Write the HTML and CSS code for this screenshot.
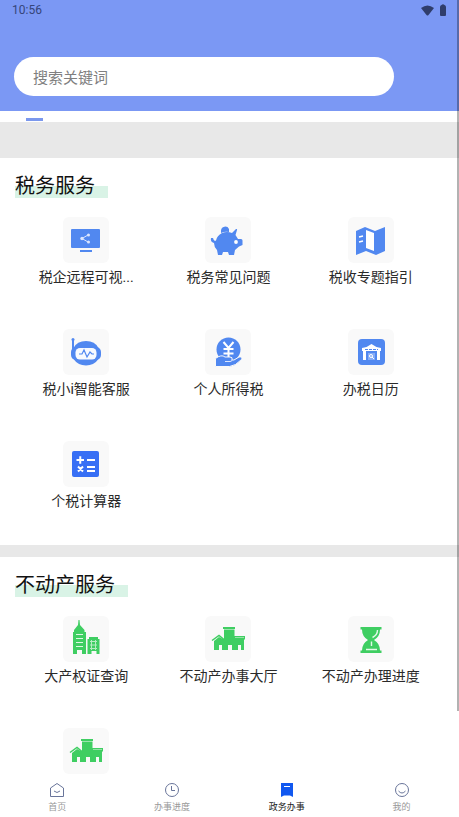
FILE: index.html
```html
<!DOCTYPE html>
<html lang="zh-CN">
<head>
<meta charset="utf-8">
<meta name="viewport" content="width=device-width, initial-scale=1">
<title>政务办事</title>
<link rel="stylesheet" href="styles.css">
</head>
<body>
<header class="header">
  <div class="status">
    <span>10:56</span>
    <span class="status-icons">
      <svg width="13" height="11" viewBox="0 0 13 11"><path d="M0 3Q6.500-2 13 3L7.500 10Q6.500 11 5.500 10Z"/></svg>
      <svg width="6" height="12" viewBox="0 0 6 12"><path d="M1.500 1Q3-.5 4.500 1Q6 1.500 6 3V11Q6 12 5 12H1Q0 12 0 11V3Q0 1.500 1.500 1Z"/></svg>
    </span>
  </div>
  <form class="search"><input type="search" placeholder="搜索关键词" aria-label="搜索关键词"></form>
</header>
<main class="content">
  <div class="tabs"><span class="tab-line"></span></div>
  <div class="band"></div>
  <section class="section">
    <h2>税务服务</h2>
    <div class="grid">
      <a class="item" href="#"><span class="tile"><svg class="blue" viewBox="0 0 46 46"><rect x="8" y="12" width="29" height="19" rx="1"/><path d="M17 33h12v2H17z"/><g fill="#dce7ff"><circle cx="19" cy="21.500" r="1.700"/><circle cx="25.500" cy="18" r="1.500"/><circle cx="25.500" cy="25" r="1.500"/></g><path d="M25 18l-6 3.500 6 3.500" fill="none" stroke="#dce7ff"/></svg></span><span class="label">税企远程可视...</span></a>
      <a class="item" href="#"><span class="tile"><svg class="blue" viewBox="0 0 46 46"><path d="M16 13.500a4.200 4.200 0 0 1 8-1.500v3q-4-1-8 1z"/><path d="M8 21q1 4 3 2.500 1-5 6-7.500 5-2 10 0l4-4q1.500-.5 1 1l-1.500 5 2.500 4h3q1.500 0 1.500 1.500v4.500l-3.500 1.500-4 3.500-1 5h-5l-1-3h-5l-1 3h-4l-1-5q-3-3-3-7-4-1-3-5z"/><circle cx="31" cy="25" r="1.900" fill="#fff"/></svg></span><span class="label">税务常见问题</span></a>
      <a class="item" href="#"><span class="tile"><svg class="blue" viewBox="0 0 46 46"><path d="M8 14l9-4 10 4 10-4v24l-9 4-10-4-10 4z"/><path d="M18 13l8 3v18l-8-3z" fill="#fff"/><path d="M11 20l4-1m-4 6l4-1" fill="none" stroke="#fff" stroke-width="1.500"/></svg></span><span class="label">税收专题指引</span></a>
      <a class="item" href="#"><span class="tile"><svg class="blue" viewBox="0 0 46 46"><circle cx="10" cy="10.500" r="1.500"/><path d="M9 11h2v11H9z"/><rect x="8" y="18" width="30" height="13" rx="5"/><path d="M10.500 19q3.500-7 12.500-7t12.500 7v11q-4.500 6.500-12.500 6.500T10.500 30z"/><rect x="12.500" y="19" width="21" height="11.500" rx="4.500" fill="#f7faff"/><path d="M16 25h3l2-4 3 7 3-5 2 2h2" fill="none" stroke="#5188f0" stroke-width="1.200"/></svg></span><span class="label">税小i智能客服</span></a>
      <a class="item" href="#"><span class="tile"><svg class="blue" viewBox="0 0 46 46"><circle cx="23.500" cy="20.500" r="12"/><path d="M18.500 13l5 6 5-6M23.500 19v9M18.500 20h10M18.500 24.500h10" fill="none" stroke="#fff" stroke-width="2"/><path d="M10.500 29.500q6-4.500 9.500-1.500h5q3 0 2 3h2l5-3q4-.5 2.500 2.500-6 6.500-12 7H10.500z" stroke="#f9f9f9"/><path d="M20 32.500h5q2 0 2-1.500" fill="none" stroke="#dce7ff"/></svg></span><span class="label">个人所得税</span></a>
      <a class="item" href="#"><span class="tile"><svg class="blue" viewBox="0 0 46 46"><rect x="10" y="10" width="27" height="26" rx="4"/><path d="M14 19q6-1 9.500-4 3.500 3 9.500 4v3H14zM15 22h3v9h-3zm14 0h3v9h-3z" fill="#fff"/><path d="M17 20.500h13" stroke="#5188f0" stroke-dasharray="3 1"/><rect x="20" y="24" width="7" height="7" fill="#86acf6"/><circle cx="23" cy="27" r="1.500" fill="none" stroke="#fff"/><path d="M24 28l2 2" stroke="#fff"/></svg></span><span class="label">办税日历</span></a>
      <a class="item" href="#"><span class="tile"><svg class="calc" viewBox="0 0 46 46"><rect x="9" y="10" width="27" height="26" rx="2"/><path d="M13.500 19h7.500m-3.750-3.750v7.500M24 19h8M15 25.500l5 5m0-5l-5 5M24 26h8m-8 4h8" fill="none" stroke="#fff" stroke-width="2"/></svg></span><span class="label">个税计算器</span></a>
    </div>
  </section>
  <div class="divider"></div>
  <section class="section">
    <h2>不动产服务</h2>
    <div class="grid">
      <a class="item" href="#"><span class="tile"><svg class="green" viewBox="0 0 46 46"><path d="M15.500 4h1l.5 5 4.500 5v2h1.500v22h-4v-4h-5v4h-4V16h1v-2l4-5z"/><path d="M13 18.500h7m-7 4h7m-7 4h7m-7 4h7" stroke="#dff7e4"/><path d="M26 21h9v2h1.500v15h-3v-3h-5v3h-4V23H26z"/><path d="M27 25.500h7m-7 3.500h7m-7 3.500h7M28.500 24v10m4-10v10" stroke="#b5ecc1"/></svg></span><span class="label">大产权证查询</span></a>
      <a class="item" href="#"><span class="tile"><svg class="green" viewBox="0 0 46 46"><use href="#hall"/></svg></span><span class="label">不动产办事大厅</span></a>
      <a class="item" href="#"><span class="tile"><svg class="green" viewBox="0 0 46 46"><path d="M12.500 11h21v2.500H32q0 7-6 10.500 6 3.500 6 10.500h1.500V37h-21v-2.500H14q0-7 6-10.500-6-3.500-6-10.500h-1.500z"/><path d="M29.500 14q0 5-5 7.500M23.500 25.500v4.500M18 33.500h11" fill="none" stroke="#e3f8e8" stroke-width="1.400"/></svg></span><span class="label">不动产办理进度</span></a>
      <a class="item" href="#"><span class="tile"><svg class="green" viewBox="0 0 46 46"><g id="hall"><path d="M18 11h12v2H18zM19 13.500h10.500V20H40v3.500h-1V34h-3v-5h-3v5h-6v-5h-4v5h-6v-5h-3v5H9V25l5-4 4 2h1z"/><path d="M7 24.500l7-5 5 4" fill="none" stroke="#3fce62" stroke-width="1.500"/><path d="M30 21.500h9" stroke="#a9e9b8" stroke-width=".8"/></g></svg></span></a>
    </div>
  </section>
</main>
<nav class="nav">
  <a href="#"><svg viewBox="0 0 16 16"><path d="M1.500 6L8 1.500 14.500 6v8.500h-13zM5 9q3 3 6 0"/></svg><span>首页</span></a>
  <a href="#"><svg viewBox="0 0 16 16"><circle cx="8" cy="8" r="6.500"/><path d="M7.500 4v4.500h3.500"/></svg><span>办事进度</span></a>
  <a class="active" href="#"><svg viewBox="0 0 16 16"><path class="solid" d="M2 1h12v14l-3-1.500H5L2 15z"/><path class="mark" d="M5 4.500h6"/></svg><span>政务办事</span></a>
  <a href="#"><svg viewBox="0 0 16 16"><circle cx="8" cy="8" r="6.500"/><path d="M4.500 9q3.500 4 7 0"/></svg><span>我的</span></a>
</nav>
<div class="scrollbar"></div>
</body>
</html>
```
FILE: styles.css
```css
* { box-sizing: border-box; }
body {
  margin: 0;
  height: 100vh;
  display: flex;
  flex-direction: column;
  position: relative;
  overflow: hidden;
  background: #fff;
  color: #2a2a2a;
  font-family: Roboto, "Noto Sans CJK SC", sans-serif;
}
a { color: inherit; text-decoration: none; }
.header { background: #7b98f4; padding-bottom: 15px; flex: none; }
.status {
  display: flex;
  justify-content: space-between;
  align-items: center;
  height: 20px;
  padding: 0 13px 0 12px;
  font-size: 12px;
  color: #35457a;
}
.status-icons { display: flex; align-items: center; gap: 6px; }
.status-icons svg { fill: #2f3d6b; }
.search { margin: 37px 65px 0 14px; }
.search input {
  display: block;
  width: 100%;
  height: 39px;
  border: 0;
  border-radius: 20px;
  padding: 0 19px;
  background: #fff;
  font: 15px "Noto Sans CJK SC", sans-serif;
  outline: 0;
  appearance: none;
}
.search input::placeholder { color: #808080; opacity: 1; }
.content { flex: 1; min-height: 0; overflow: hidden; }
.tabs { height: 11px; padding: 7px 26px 0; }
.tab-line { display: block; width: 17px; height: 3px; background: #7b98ed; }
.band { height: 36px; background: #e8e8e8; }
.divider { height: 12px; background: #e8e8e8; }
.section { padding: 16px 17px 34px 15px; }
h2 {
  display: inline-block;
  vertical-align: top;
  margin: 0 0 19px;
  padding-right: 13px;
  font-size: 20px;
  font-weight: 400;
  line-height: 24px;
  color: #111;
  background: linear-gradient(#d9f3e6, #d9f3e6) left bottom / 100% 12px no-repeat;
}
.grid { display: grid; grid-template-columns: repeat(3, 1fr); row-gap: 42px; }
.item { display: flex; flex-direction: column; align-items: center; }
.tile { width: 46px; height: 46px; border-radius: 6px; background: #f9f9f9; }
.tile svg { display: block; width: 46px; height: 46px; }
.blue { fill: #5188f0; }
.calc { fill: #376ff5; }
.green { fill: #3fce62; }
.label { margin-top: 4px; font-size: 14px; line-height: 20px; white-space: nowrap; }
.nav { flex: none; display: grid; grid-template-columns: repeat(4, 1fr); padding: 8px 0 4px; background: #fff; }
.nav a { display: flex; flex-direction: column; align-items: center; gap: 3px; font-size: 9px; line-height: 12px; color: #999; }
.nav svg { width: 16px; height: 16px; fill: none; stroke: #69759a; }
.nav .active { color: #222; }
.nav .solid { fill: #1158f0; stroke: none; }
.nav .mark { stroke: #fff; }
.scrollbar { position: absolute; top: 0; right: 0; width: 2px; height: 87%; background: rgba(0, 0, 0, .3); }
```
